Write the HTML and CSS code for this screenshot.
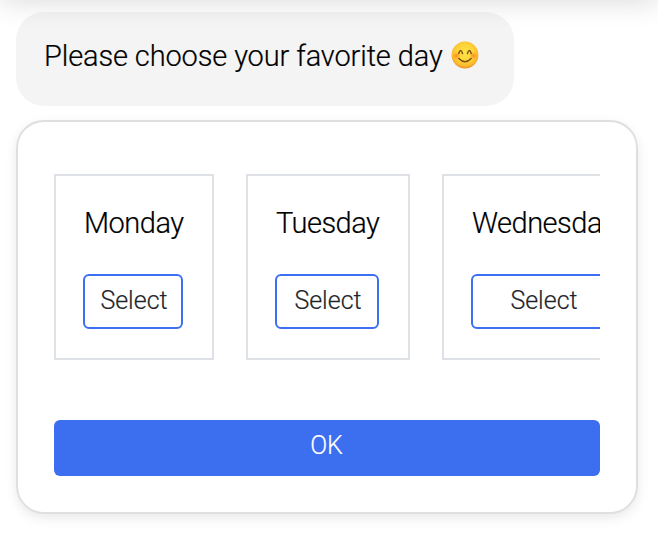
FILE: index.html
```html
<!DOCTYPE html>
<html lang="en">
<head>
<meta charset="utf-8">
<title>Favorite day</title>
<link rel="stylesheet" href="styles.css">
</head>
<body>
<header class="topbar"></header>
<main class="chat">
  <div class="bubble">
    <span>Please choose your favorite day</span>
    <svg class="emoji" viewBox="0 0 28 28" role="img" aria-label="smiling face">
      <defs>
        <radialGradient id="face" cx="50%" cy="42%" r="58%">
          <stop offset="0" stop-color="#ffe64a"/>
          <stop offset=".6" stop-color="#fed136"/>
          <stop offset=".85" stop-color="#fbb72c"/>
          <stop offset="1" stop-color="#e98f28"/>
        </radialGradient>
        <radialGradient id="blush">
          <stop offset="0" stop-color="#fb7a1e" stop-opacity=".8"/>
          <stop offset="1" stop-color="#fb8a1e" stop-opacity="0"/>
        </radialGradient>
      </defs>
      <circle cx="14" cy="14" r="13.4" fill="url(#face)"/>
      <ellipse cx="5.4" cy="14.8" rx="4.4" ry="4" fill="url(#blush)"/>
      <ellipse cx="22.6" cy="14.8" rx="4.4" ry="4" fill="url(#blush)"/>
      <path d="M7.8 12.6Q9.6 6.6 11.6 12.6M16.4 12.6Q18.4 6.6 20.2 12.6" fill="none" stroke="#80500f" stroke-width="1.5" stroke-linecap="round"/>
      <path d="M7.8 17.6Q14 24 20.2 17.6" fill="none" stroke="#80500f" stroke-width="1.5" stroke-linecap="round"/>
    </svg>
  </div>
  <section class="panel">
    <div class="days">
      <article class="day monday"><h2>Monday</h2><button>Select</button></article>
      <article class="day tuesday"><h2>Tuesday</h2><button>Select</button></article>
      <article class="day wednesday"><h2>Wednesday</h2><button>Select</button></article>
    </div>
    <button class="ok">OK</button>
  </section>
</main>
</body>
</html>
```

FILE: styles.css
```css
* { box-sizing: border-box; }
body {
  margin: 0;
  height: 542px;
  overflow: hidden;
  background: #fff;
  color: #000;
  font-family: Roboto, sans-serif;
  font-weight: 300;
  -webkit-text-stroke: .2px;
}
.topbar {
  position: relative;
  height: 40px;
  margin-top: -40px;
  background: #fff;
  box-shadow: 0 0 30px rgba(0, 0, 0, .16);
}
.chat { padding: 12px 20px 0 16px; }
.bubble {
  display: flex;
  width: 498px;
  height: 94px;
  padding: 26px 28px 0;
  border-radius: 28px;
  background: #f4f4f4;
  font-size: 29px;
  line-height: 36px;
  letter-spacing: -.12px;
  white-space: nowrap;
}
.emoji { width: 28px; height: 28px; margin: 3px 0 0 8px; flex: none; }
.panel {
  width: 622px;
  height: 394px;
  margin-top: 14px;
  padding: 52px 36px 0;
  border: 2px solid #dfdfdf;
  border-radius: 28px;
  box-shadow: 0 4px 12px rgba(0, 0, 0, .09);
}
.days { display: flex; gap: 32px; overflow: hidden; }
.day {
  flex: none;
  height: 186px;
  padding: 29px 29px 0 27px;
  border: 2px solid #dee2e6;
}
.monday { width: 160px; }
.tuesday { width: 164px; }
.wednesday { width: 204px; }
h2 {
  margin: 0 0 33px 1px;
  font-size: 29px;
  font-weight: 300;
  line-height: 36px;
  letter-spacing: -.5px;
  white-space: nowrap;
}
button {
  display: block;
  width: 100%;
  height: 55px;
  padding: 0 0 2px 2px;
  border: 2px solid #3d6ff5;
  border-radius: 6px;
  background: #fff;
  color: #212529;
  font: 300 25px/30px Roboto, sans-serif;
}
.ok {
  height: 56px;
  margin-top: 60px;
  padding: 0 1px 4px 0;
  border: 0;
  background: #3c6ef0;
  color: #fff;
}
```
